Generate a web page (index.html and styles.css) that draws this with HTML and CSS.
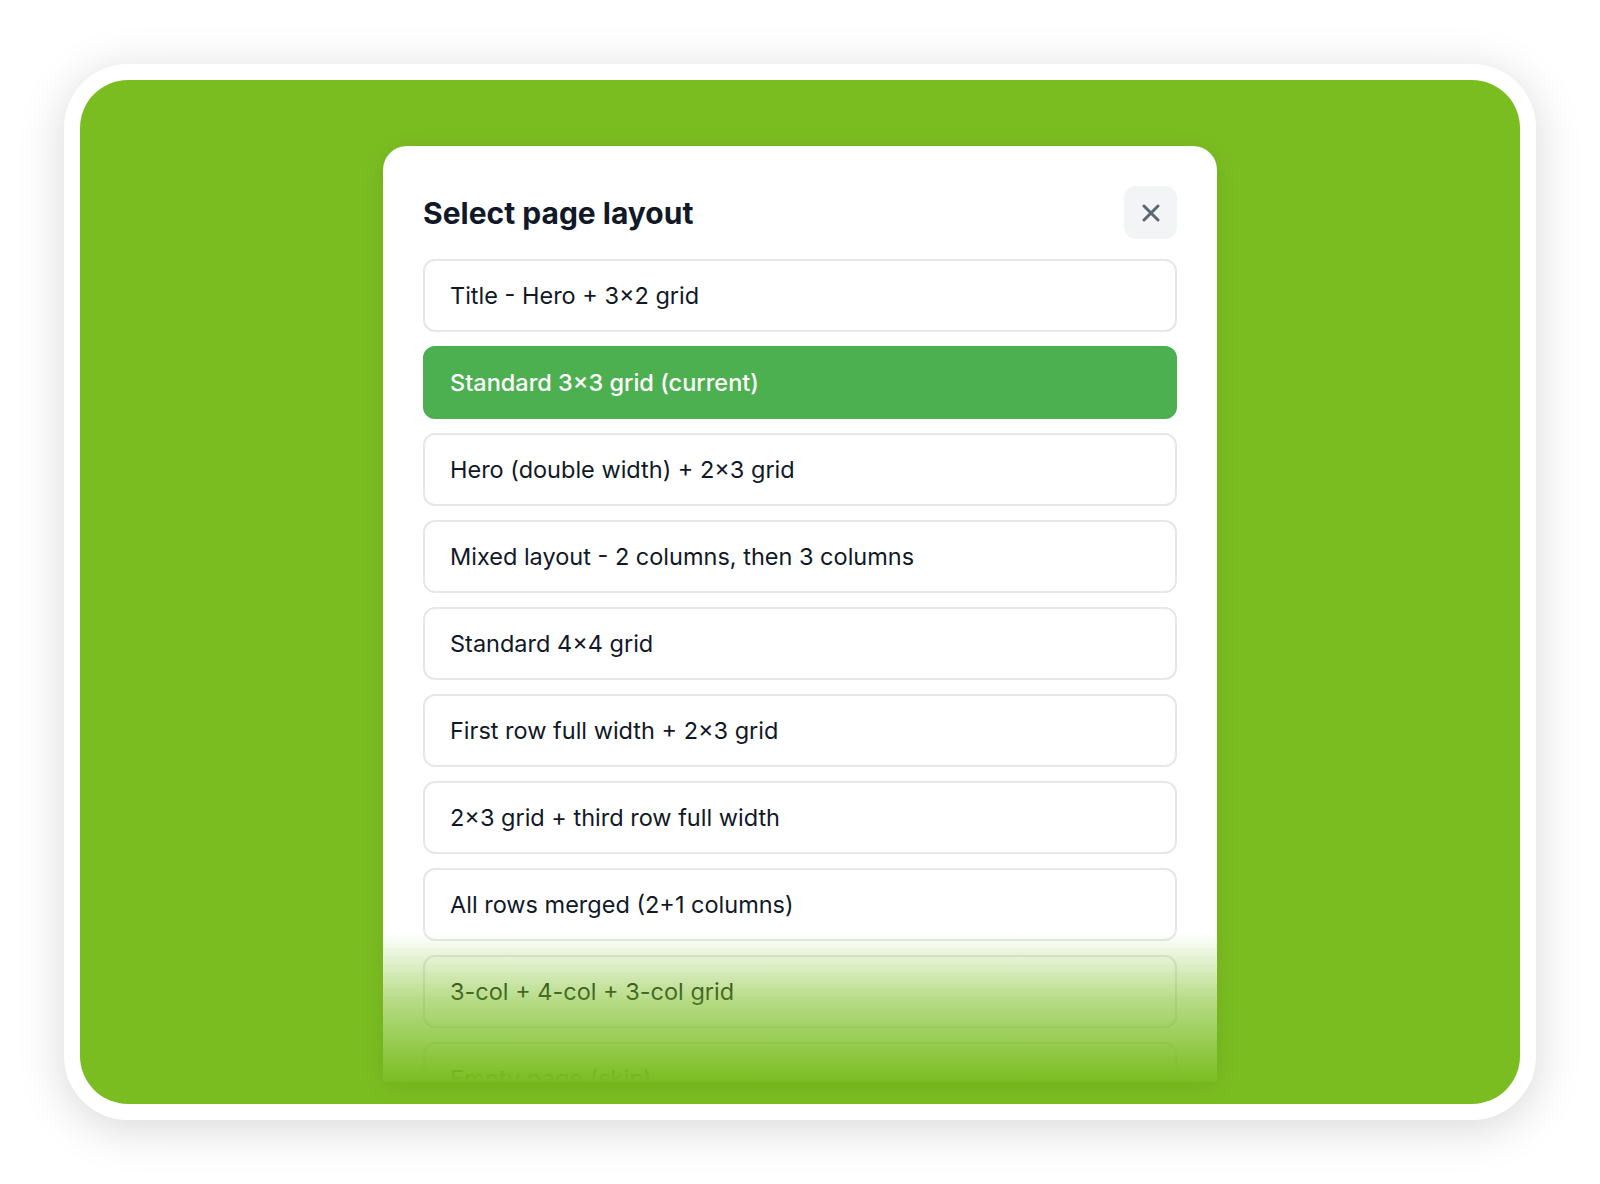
FILE: index.html
```html
<!DOCTYPE html>
<html lang="en">
<head>
    <meta charset="UTF-8">
    <meta name="viewport" content="width=device-width, initial-scale=1.0">
    <title>Select page layout</title>
    <link rel="stylesheet" href="styles.css">
</head>
<body>
    <!-- Framed preview -->
    <div class="frame">
        <div class="stage">
            <!-- Layout picker dialog -->
            <div class="dialog">
                <div class="dialog-header">
                    <h2>Select page layout</h2>
                    <button class="close-btn" aria-label="Close">
                        <svg width="18" height="18" viewBox="0 0 18 18" fill="none">
                            <path d="M2 2L16 16M16 2L2 16" stroke="#5f6572" stroke-width="3" stroke-linecap="round"/>
                        </svg>
                    </button>
                </div>
                <ul class="layout-list">
                    <li class="layout-option">Title - Hero + 3×2 grid</li>
                    <li class="layout-option selected">Standard 3×3 grid (current)</li>
                    <li class="layout-option">Hero (double width) + 2×3 grid</li>
                    <li class="layout-option">Mixed layout - 2 columns, then 3 columns</li>
                    <li class="layout-option">Standard 4×4 grid</li>
                    <li class="layout-option">First row full width + 2×3 grid</li>
                    <li class="layout-option">2×3 grid + third row full width</li>
                    <li class="layout-option">All rows merged (2+1 columns)</li>
                    <li class="layout-option">3-col + 4-col + 3-col grid</li>
                    <li class="layout-option">Empty page (skip)</li>
                </ul>
                <div class="fade"></div>
            </div>
        </div>
    </div>
</body>
</html>
```

FILE: styles.css
```css
body {
    margin: 0;
    padding: 64px 0;
    background-color: #ffffff;
    font-family: Inter, "Noto Sans", sans-serif;
    color: #111827;
}

.frame {
    width: 1440px;
    margin: 0 auto;
    padding: 16px;
    background-color: #ffffff;
    border-radius: 64px;
    box-shadow: 0px 8px 48px rgba(0, 0, 0, 0.16);
}

.stage {
    height: 958px;
    padding-top: 66px;
    background-color: #7abd21;
    border-radius: 48px;
    overflow: hidden;
}

.dialog {
    position: relative;
    width: 754px;
    height: 896px;
    margin: 0 auto;
    padding: 40px 40px 0;
    background-color: white;
    border-radius: 24px 24px 0 0;
    box-shadow: 0px 4px 24px rgba(0, 0, 0, 0.08);
    overflow: hidden;
}

.dialog-header {
    display: flex;
    align-items: center;
    justify-content: space-between;
    margin-bottom: 20px;
}

.dialog-header h2 {
    margin: 0;
    font-size: 30px;
    font-weight: 700;
    color: #111827;
}

.close-btn {
    width: 53px;
    height: 53px;
    display: flex;
    align-items: center;
    justify-content: center;
    border: none;
    border-radius: 12px;
    background-color: #f3f4f6;
    cursor: pointer;
}

.layout-list {
    list-style: none;
    margin: 0;
    padding: 0;
    display: flex;
    flex-direction: column;
    gap: 14px;
}

.layout-option {
    height: 69px;
    display: flex;
    align-items: center;
    padding: 0 25px;
    border: 2px solid #e5e7eb;
    border-radius: 12px;
    font-size: 23.5px;
    font-weight: 400;
    color: #111827;
    cursor: pointer;
}

.layout-option.selected {
    background-color: #4caf50;
    border-color: #4caf50;
    color: white;
    font-weight: 500;
}

.fade {
    position: absolute;
    left: 0;
    right: 0;
    bottom: 0;
    height: 148px;
    background: linear-gradient(to bottom, rgba(122, 189, 33, 0) 0%, rgba(122, 189, 33, 0.55) 45%, rgba(122, 189, 33, 1) 100%);
}
```
